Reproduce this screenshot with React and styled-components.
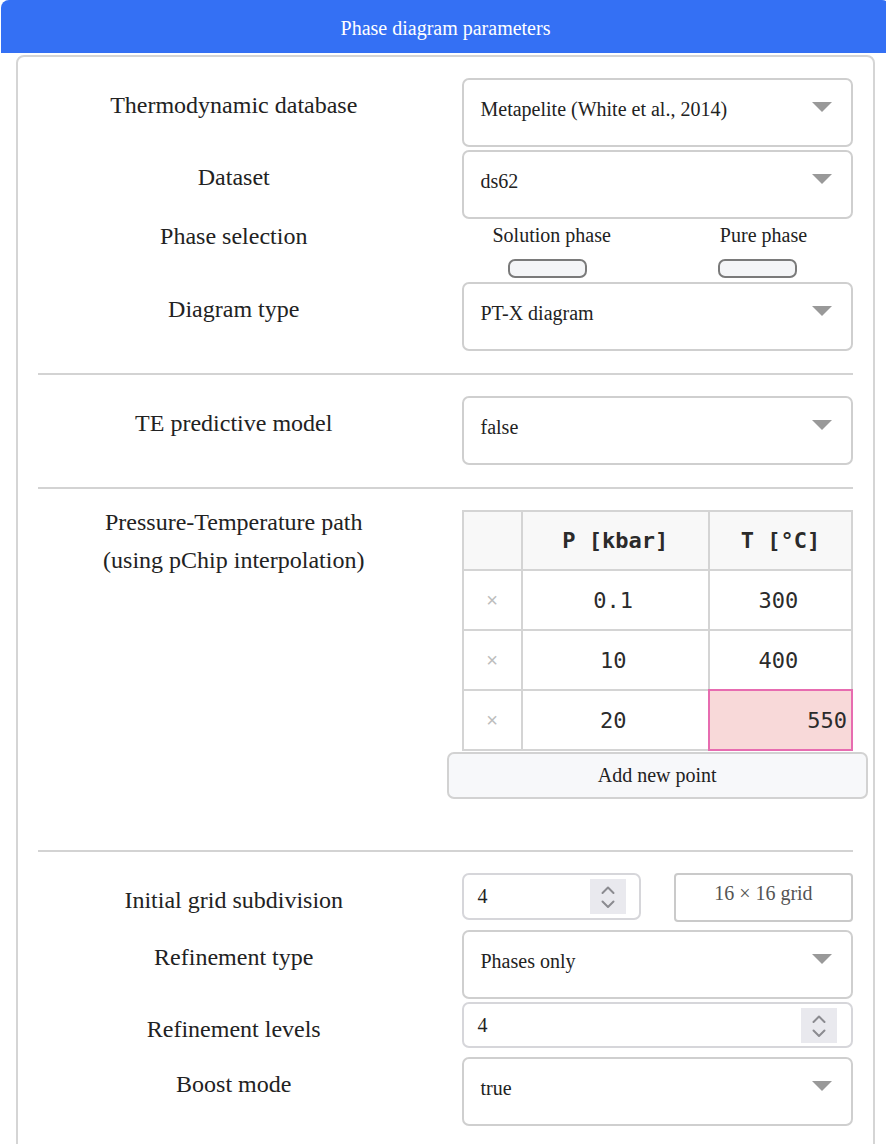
import React from 'react';
import styled, { createGlobalStyle } from 'styled-components';

const GlobalStyle = createGlobalStyle`
  html, body {
    margin: 0;
    background: #fff;
    overflow: hidden;
  }

  body {
    font-family: "Liberation Serif", "Times New Roman", serif;
    color: #222;
  }

  * {
    box-sizing: border-box;
  }
`;

const Page = styled.div`
  width: 890px;
  padding-left: 1px;
`;

const Header = styled.div`
  height: 53px;
  padding-top: 3px;
  display: flex;
  align-items: center;
  justify-content: center;
  background: #3470f4;
  border-radius: 8px 8px 0 0;
  color: #fff;
  font-size: 20px;
`;

const Panel = styled.div`
  width: 859px;
  margin: 2px 0 0 15px;
  padding: 21px 20px 40px;
  border: 2px solid #d5d5d5;
  border-radius: 8px;
`;

const Row = styled.div`
  display: grid;
  grid-template-columns: 1fr 1fr;
  column-gap: 32px;
  height: ${(p) => (p.$height ? `${p.$height}px` : 'auto')};
  margin-bottom: ${(p) => p.$mb || 0}px;
`;

const Label = styled.div`
  padding-top: ${(p) => (p.$top !== undefined ? p.$top : 14)}px;
  text-align: center;
  font-size: 24px;
  line-height: ${(p) => p.$lh || 26}px;
`;

const Divider = styled.hr`
  margin: ${(p) => p.$before}px 0 ${(p) => p.$after}px;
  border: 0;
  border-top: 2px solid #d3d3d3;
`;

/* select */

const SelectBox = styled.div`
  height: 69px;
  display: flex;
  justify-content: space-between;
  align-items: flex-start;
  padding: 17px 19px 0 17px;
  border: 2px solid #cfcfcf;
  border-radius: 7px;
  font-size: 20px;
  line-height: 24px;
`;

const Caret = styled.span`
  width: 0;
  height: 0;
  margin-top: 5px;
  border-left: 10px solid transparent;
  border-right: 10px solid transparent;
  border-top: 10px solid #999;
`;

const Select = ({ value }) => (
  <SelectBox>
    <span>{value}</span>
    <Caret />
  </SelectBox>
);

/* phase toggles */

const Toggles = styled.div`
  display: flex;
  gap: 109px;
  padding: 4px 0 0 31px;
`;

const ToggleItem = styled.div`
  display: flex;
  flex-direction: column;
  align-items: flex-start;
  gap: 12px;
  font-size: 20px;
  line-height: 24px;
`;

const Pill = styled.span`
  width: 79px;
  height: 19px;
  margin-left: ${(p) => p.$offset}px;
  border: 2px solid #7a7a7a;
  border-radius: 7px;
  background: #f4f5f7;
`;

/* P-T table */

const Table = styled.table`
  width: 100%;
  margin-top: 21px;
  table-layout: fixed;
  border-collapse: separate;
  border-spacing: 0;
  border-top: 2px solid #d4d4d4;
  border-left: 2px solid #d4d4d4;
  font-family: "DejaVu Sans Mono", "Liberation Mono", monospace;
  font-size: 22px;
  color: #2b2b2b;
`;

const Th = styled.th`
  width: ${(p) => p.$w}px;
  height: 59px;
  border-right: 2px solid #d4d4d4;
  border-bottom: 2px solid #d4d4d4;
  background: #f8f8f8;
  font-weight: bold;
  text-align: center;
`;

const Td = styled.td`
  position: relative;
  height: 60px;
  padding: 0 4px 0 0;
  border-right: 2px solid #d4d4d4;
  border-bottom: 2px solid #d4d4d4;
  text-align: ${(p) => (p.$invalid ? 'right' : 'center')};
  background: ${(p) => (p.$invalid ? '#f8d9d9' : '#fff')};

  ${(p) =>
    p.$invalid &&
    `
    &::after {
      content: '';
      position: absolute;
      inset: -2px;
      border: 2px solid #e76cb0;
    }
  `}
`;

const Remove = styled.td`
  height: 60px;
  border-right: 2px solid #d4d4d4;
  border-bottom: 2px solid #d4d4d4;
  text-align: center;
  font-family: "Liberation Sans", Arial, sans-serif;
  font-size: 20px;
  color: #bdbdbd;
`;

const AddButton = styled.button`
  display: block;
  width: calc(100% + 30px);
  height: 47px;
  margin: 1px -15px 0;
  border: 2px solid #d2d2d2;
  border-radius: 7px;
  background: #f7f8fa;
  font-family: "Liberation Serif", "Times New Roman", serif;
  font-size: 20px;
  color: #222;
`;

/* number inputs */

const Pair = styled.div`
  display: grid;
  grid-template-columns: 1fr 1fr;
  column-gap: 33px;
`;

const NumberBox = styled.div`
  height: ${(p) => p.$h}px;
  display: flex;
  align-items: center;
  padding: 0 ${(p) => p.$pr}px 0 14px;
  border: 2px solid #d6d6da;
  border-radius: 7px;
  font-size: 20px;
`;

const Spinner = styled.span`
  display: flex;
  width: 36px;
  height: 35px;
  margin-left: auto;
  background: #e9e9ee;
`;

const GridInfo = styled.div`
  height: 49px;
  padding-top: 6px;
  border: 2px solid #cacaca;
  border-radius: 4px;
  text-align: center;
  font-size: 20px;
  line-height: 24px;
  color: #555;
`;

const NumberInput = ({ value, height = 47, pr = 13 }) => (
  <NumberBox $h={height} $pr={pr}>
    <span>{value}</span>
    <Spinner>
      <svg width="36" height="35" viewBox="0 0 36 35">
        <polyline points="12.5,14 18,8.5 23.5,14" fill="none" stroke="#8b8b90" strokeWidth="2" strokeLinecap="round" strokeLinejoin="round" />
        <polyline points="12.5,22.5 18,28 23.5,22.5" fill="none" stroke="#8b8b90" strokeWidth="2" strokeLinecap="round" strokeLinejoin="round" />
      </svg>
    </Spinner>
  </NumberBox>
);

const points = [
  { p: '0.1', t: '300' },
  { p: '10', t: '400' },
  { p: '20', t: '550', invalid: true },
];

export default function App() {
  return (
    <Page>
      <GlobalStyle />
      <Header>Phase diagram parameters</Header>
      <Panel>
        <Row $mb={3}>
          <Label>Thermodynamic database</Label>
          <Select value="Metapelite (White et al., 2014)" />
        </Row>
        <Row>
          <Label>Dataset</Label>
          <Select value="ds62" />
        </Row>
        <Row $height={63}>
          <Label $top={4}>Phase selection</Label>
          <Toggles>
            <ToggleItem>
              Solution phase
              <Pill $offset={15} />
            </ToggleItem>
            <ToggleItem>
              Pure phase
              <Pill $offset={-2} />
            </ToggleItem>
          </Toggles>
        </Row>
        <Row>
          <Label>Diagram type</Label>
          <Select value="PT-X diagram" />
        </Row>

        <Divider $before={22} $after={21} />

        <Row>
          <Label>TE predictive model</Label>
          <Select value="false" />
        </Row>

        <Divider $before={22} $after={0} />

        <Row>
          <Label $lh={38}>
            Pressure-Temperature path
            <br />
            (using pChip interpolation)
          </Label>
          <div>
            <Table>
              <thead>
                <tr>
                  <Th $w={59} />
                  <Th $w={187}>P [kbar]</Th>
                  <Th $w={143}>T [°C]</Th>
                </tr>
              </thead>
              <tbody>
                {points.map((pt) => (
                  <tr key={pt.p}>
                    <Remove>×</Remove>
                    <Td>{pt.p}</Td>
                    <Td $invalid={pt.invalid}>{pt.t}</Td>
                  </tr>
                ))}
              </tbody>
            </Table>
            <AddButton>Add new point</AddButton>
          </div>
        </Row>

        <Divider $before={51} $after={21} />

        <Row $mb={8}>
          <Label>Initial grid subdivision</Label>
          <Pair>
            <NumberInput value="4" />
            <GridInfo>16 × 16 grid</GridInfo>
          </Pair>
        </Row>
        <Row $mb={3}>
          <Label>Refinement type</Label>
          <Select value="Phases only" />
        </Row>
        <Row $mb={9}>
          <Label>Refinement levels</Label>
          <NumberInput value="4" height={46} pr={14} />
        </Row>
        <Row>
          <Label>Boost mode</Label>
          <Select value="true" />
        </Row>
      </Panel>
    </Page>
  );
}
